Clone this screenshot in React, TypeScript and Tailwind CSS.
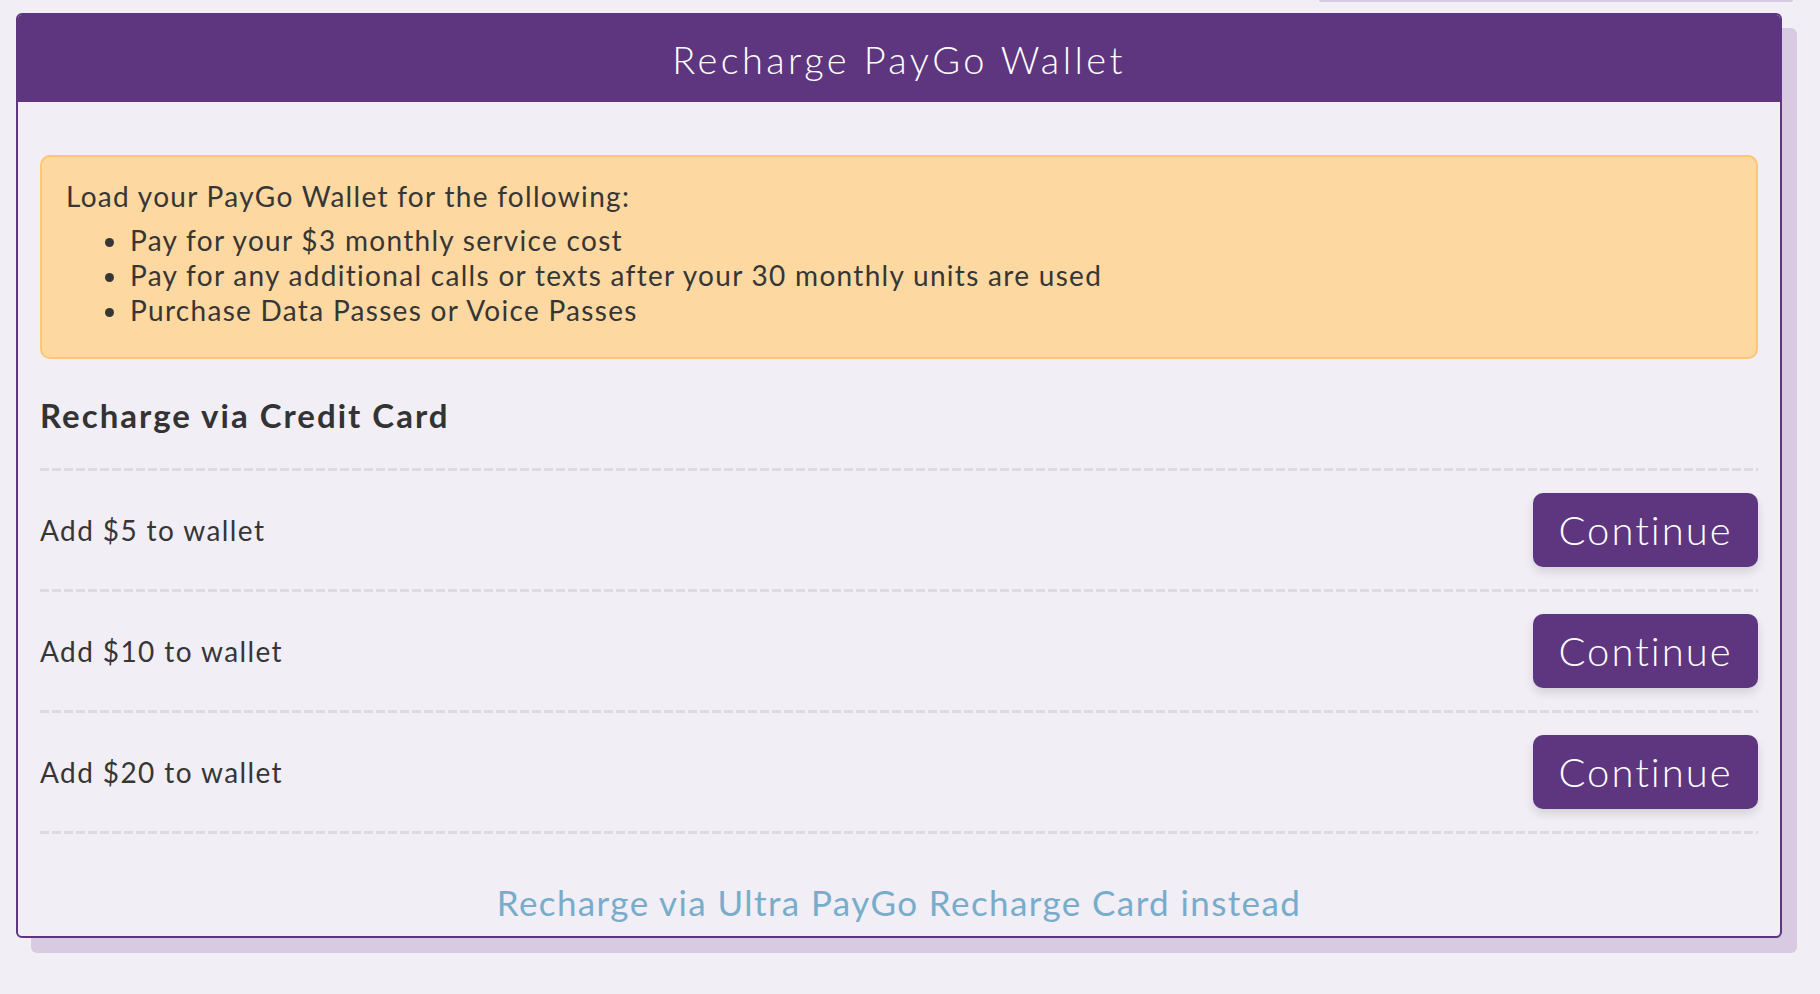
import React from "react";

const rows = ["Add $5 to wallet", "Add $10 to wallet", "Add $20 to wallet"];

function Dash() {
  return (
    <div className="h-[3px] w-full bg-[repeating-linear-gradient(90deg,#dddbdf_0px,#dddbdf_9px,transparent_9px,transparent_12px)]" />
  );
}

export default function App() {
  return (
    <div className="min-h-[994px] w-full bg-[#f1eef6] font-['Lato','Open_Sans',sans-serif] text-[#333333]">
      <div className="flex h-[2px] w-full">
        <div className="ml-[1319px] h-[2px] w-[474px] rounded-b-[3px] bg-[#d8cae0]" />
      </div>
      <div className="ml-[16px] mt-[11px] w-[1766px] overflow-hidden rounded-[6px] border-2 border-[#5e3680] bg-[#f1eef6] shadow-[15px_15px_0_#d8cae0]">
        <div className="flex h-[87px] items-center justify-center bg-[#5e3680] pt-[2px]">
          <h1 className="text-[38px] font-light tracking-[3.4px] text-white">Recharge PayGo Wallet</h1>
        </div>
        <div className="px-[22px] pt-[53px] pb-[14px]">
          <div className="rounded-[10px] border-2 border-[#fcc774] bg-[#fdd8a0] pl-[24px] pr-[26px] pt-[22px] pb-[29px] text-[28px] leading-[35px] tracking-[1.3px] text-[#363636]">
            <p>Load your PayGo Wallet for the following:</p>
            <ul className="mt-[9px] list-disc pl-[64px]">
              <li>Pay for your $3 monthly service cost</li>
              <li>Pay for any additional calls or texts after your 30 monthly units are used</li>
              <li>Purchase Data Passes or Voice Passes</li>
            </ul>
          </div>
          <h2 className="mt-[36px] text-[33px] font-bold leading-[40px] tracking-[2px] text-[#333333]">Recharge via Credit Card</h2>
          <div className="mt-[33px]">
            {rows.map((r) => (
              <div key={r}>
                <Dash />
                <div className="flex items-center justify-between py-[22px]">
                  <span className="text-[28px] leading-[35px] tracking-[1.4px] text-[#363636]">{r}</span>
                  <button className="flex h-[74px] w-[225px] items-center justify-center rounded-[10px] bg-[#5e3680] text-[40px] font-light tracking-[2px] text-white shadow-[0_5px_10px_rgba(0,0,0,0.12)]">
                    Continue
                  </button>
                </div>
              </div>
            ))}
            <Dash />
          </div>
          <div className="mt-[48px] text-center text-[35px] leading-[40px] tracking-[1.4px] text-[#77adcb]">
            Recharge via Ultra PayGo Recharge Card instead
          </div>
        </div>
      </div>
    </div>
  );
}
